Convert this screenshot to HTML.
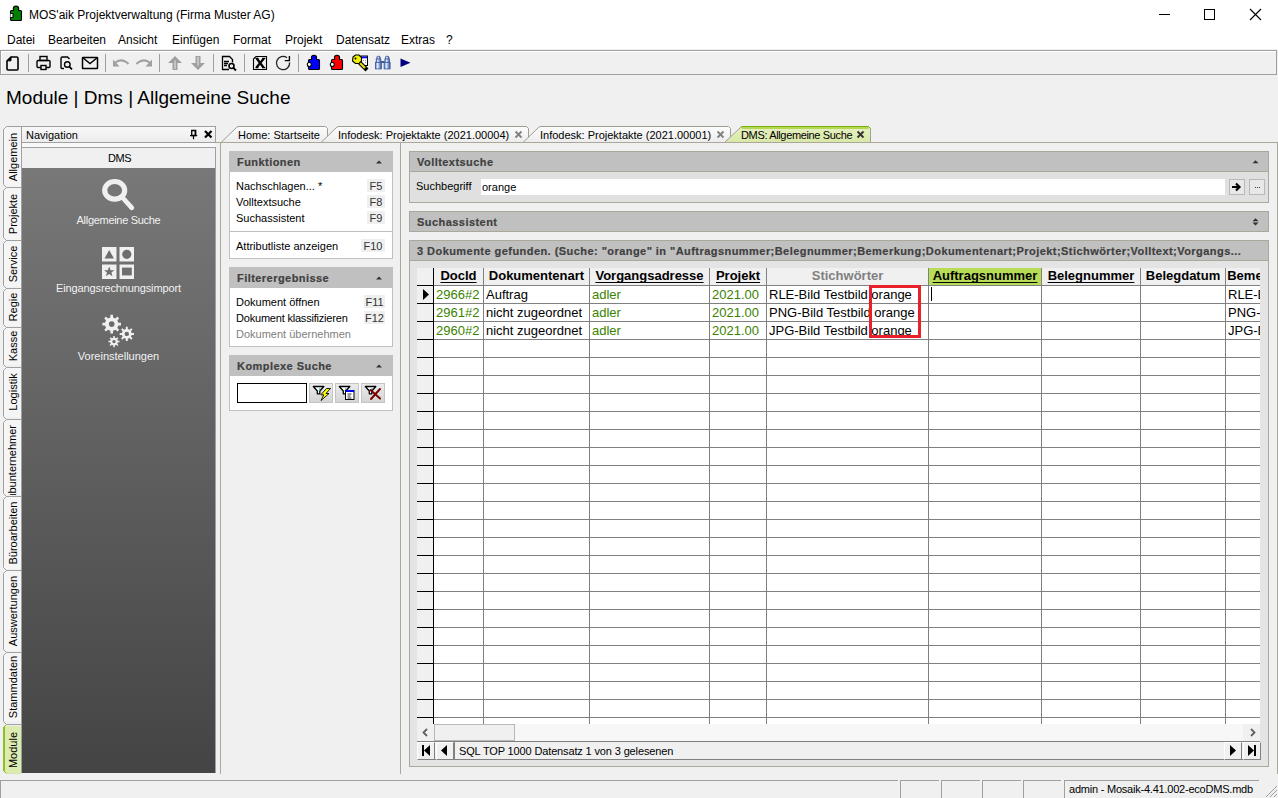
<!DOCTYPE html>
<html><head><meta charset="utf-8">
<style>
*{margin:0;padding:0;box-sizing:border-box}
html,body{width:1278px;height:798px;overflow:hidden;background:#f0f0f0;font-family:"Liberation Sans",sans-serif;color:#000}
.a{position:absolute}
.t{position:absolute;white-space:nowrap;line-height:1}
#title{left:0;top:0;width:1278px;height:28px;background:#fff}
#menu{left:0;top:28px;width:1278px;height:21px;background:#fff}
#tb{left:0;top:50px;width:1277px;height:25px;border:1px solid #a0a0a0;background:#f0f0f0;box-shadow:inset 1px 1px 0 #fff}
.sep{position:absolute;top:54px;width:1px;height:18px;background:#a0a0a0}

.vt{position:absolute;left:4px;width:17px;background:#f5f5f5;overflow:hidden}
.vt span{position:absolute;left:50%;top:50%;transform:translate(-50%,-50%) rotate(-90deg);font-size:11px;white-space:nowrap;line-height:1}
#nav{left:21px;top:126px;width:195px;height:17px;border:1px solid #a0a0a0;background:linear-gradient(#f8f8f8,#ececec)}
#dms{left:21px;top:147px;width:195px;height:21px;border:1px solid #a0a0a0;border-bottom:none;background:#f0f0f0}
#dark{left:21px;top:168px;width:195px;height:605px;background:linear-gradient(#787878,#444444);border-left:1px solid #a0a0a0;border-right:1px solid #a0a0a0}
.nl{position:absolute;font-size:11px;color:#f2f2f2;white-space:nowrap;line-height:1;text-align:center;width:195px;left:21px}

.dt{position:absolute;top:126px;height:17px;font-size:11px;line-height:1}
.bx{position:absolute;border:1px solid #aca899}
.hd{position:absolute;background:#c0c0c0;font-size:11px;font-weight:bold;color:#404040;line-height:1;white-space:nowrap;letter-spacing:0.45px;overflow:hidden;-webkit-text-stroke:0.2px #404040}
.tp{position:absolute;font-size:11px;line-height:1;white-space:nowrap}
.fk{position:absolute;background:#efefef;font-size:11px;line-height:1;color:#333;text-align:center}

.gh{position:absolute;top:269px;font-size:13px;font-weight:bold;line-height:1;white-space:nowrap}
.gh u{text-decoration:underline;text-decoration-thickness:1px;text-underline-offset:1.5px;text-decoration-skip-ink:none}
.gc{position:absolute;font-size:13px;line-height:1;white-space:nowrap}
.gg{color:#3a8200}

.tab{position:absolute;top:126px;height:17px}
.tab svg{position:absolute;left:0;top:0}
.tab span{position:absolute;top:4px;font-size:11px;line-height:1;white-space:nowrap}
</style></head><body>
<!-- title bar -->
<div class="a" id="title"></div>
<div class="t" style="left:29px;top:9px;font-size:12px">MOS'aik Projektverwaltung (Firma Muster AG)</div>
<div class="a" id="menu"></div>
<div class="t" style="left:7px;top:34px;font-size:12px">Datei</div>
<div class="t" style="left:48px;top:34px;font-size:12px">Bearbeiten</div>
<div class="t" style="left:118px;top:34px;font-size:12px">Ansicht</div>
<div class="t" style="left:172px;top:34px;font-size:12px">Einfügen</div>
<div class="t" style="left:233px;top:34px;font-size:12px">Format</div>
<div class="t" style="left:285px;top:34px;font-size:12px">Projekt</div>
<div class="t" style="left:336px;top:34px;font-size:12px">Datensatz</div>
<div class="t" style="left:401px;top:34px;font-size:12px">Extras</div>
<div class="t" style="left:446px;top:34px;font-size:12px">?</div>
<div class="a" id="tb"></div>

<div class="t" style="left:6px;top:88px;font-size:19px">Module | Dms | Allgemeine Suche</div>


<!-- left vertical tabs -->
<div class="vt" style="top:127px;height:60px"><span>Allgemein</span></div>
<div class="vt" style="top:187px;height:53px"><span>Projekte</span></div>
<div class="vt" style="top:240px;height:47px"><span>Service</span></div>
<div class="vt" style="top:288px;height:38px"><span>Regie</span></div>
<div class="vt" style="top:327px;height:38px"><span>Kasse</span></div>
<div class="vt" style="top:367px;height:50px"><span>Logistik</span></div>
<div class="vt" style="top:419px;height:76px"><span style="top:6px;left:50%;transform-origin:0 0;transform:translate(-6.5px,0) rotate(-90deg) translate(-100%,0)">Subunternehmer</span></div>
<div class="vt" style="top:496px;height:73px"><span>Büroarbeiten</span></div>
<div class="vt" style="top:570px;height:81px"><span>Auswertungen</span></div>
<div class="vt" style="top:652px;height:69px"><span>Stammdaten</span></div>
<div class="vt" style="top:726px;height:47px;background:#dcebb0"><span>Module</span></div>

<svg class="a" style="left:0;top:0" width="25" height="798" viewBox="0 0 25 798"><path d="M21 126.5 H6.5 L3.5 129.5 V184.5 L6.5 187.5 H21 M21 187.5 H6.5 L3.5 190.5 V237.5 L6.5 240.5 H21 M21 240.5 H6.5 L3.5 243.5 V285.5 L6.5 288.5 H21 M21 288.5 H6.5 L3.5 291.5 V324.5 L6.5 327.5 H21 M21 327.5 H6.5 L3.5 330.5 V364.5 L6.5 367.5 H21 M21 367.5 H6.5 L3.5 370.5 V416.5 L6.5 419.5 H21 M21 419.5 H6.5 L3.5 422.5 V493.5 L6.5 496.5 H21 M21 496.5 H6.5 L3.5 499.5 V567.5 L6.5 570.5 H21 M21 570.5 H6.5 L3.5 573.5 V649.5 L6.5 652.5 H21 M21 652.5 H6.5 L3.5 655.5 V721.5 L6.5 724.5 H21" fill="none" stroke="#a0a0a0"/><path d="M21 773.5 H6.5" stroke="#d8e4b0"/><path d="M6.5 724.5 L3.5 727.5 V770.5 L6.5 773.5" fill="none" stroke="#8cbf26" stroke-width="1"/><path d="M4 727 V771" stroke="#8cbf26" stroke-width="2"/></svg>
<!-- navigation panel -->
<div class="a" id="nav"></div>
<div class="t" style="left:26px;top:130px;font-size:11px">Navigation</div>
<div class="a" id="dms"></div>
<div class="a" style="left:21px;top:142px;width:1px;height:6px;background:#a0a0a0"></div>
<div class="a" style="left:22px;top:143px;width:193px;height:4px;background:#f8f8f8"></div>
<div class="t" style="left:22px;top:153px;width:195px;text-align:center;font-size:11px;letter-spacing:-0.4px">DMS</div>
<div class="a" id="dark"></div>
<div class="nl" style="top:215px;letter-spacing:-0.3px">Allgemeine Suche</div>
<div class="nl" style="top:283px;letter-spacing:-0.13px">Eingangsrechnungsimport</div>
<div class="nl" style="top:351px">Voreinstellungen</div>

<!-- nav icons -->
<svg class="a" style="left:0;top:0" width="230" height="380" viewBox="0 0 230 380">
  <g fill="none" stroke="#f0f0f0">
    <ellipse cx="114.7" cy="190.3" rx="10" ry="8.8" stroke-width="5.2"/>
    <line x1="122.5" y1="197.5" x2="131.8" y2="207.8" stroke-width="4.8" stroke-linecap="round"/>
  </g>
  <g fill="#f0f0f0">
    <rect x="102" y="247" width="14.5" height="14.5"/>
    <rect x="119.5" y="247" width="14.5" height="14.5"/>
    <rect x="102" y="264.5" width="14.5" height="14.5"/>
    <rect x="119.5" y="264.5" width="14.5" height="14.5"/>
  </g>
  <g fill="#6e6e6e">
    <polygon points="109.2,250 104.5,258.5 114,258.5"/>
    <circle cx="126.8" cy="254.3" r="4.6"/>
    <polygon points="109.2,266.5 110.6,270.2 114.4,270.3 111.4,272.6 112.5,276.3 109.2,274.1 105.9,276.3 107,272.6 104,270.3 107.8,270.2"/>
    <rect x="122" y="267.6" width="9.8" height="7.8"/>
  </g>
  <path fill="#f0f0f0" fill-rule="evenodd" d="M118.37,322.77 L121.01,322.81 L121.01,325.39 L118.37,325.43 L117.35,327.88 L119.19,329.77 L117.37,331.59 L115.48,329.75 L113.03,330.77 L112.99,333.41 L110.41,333.41 L110.37,330.77 L107.92,329.75 L106.03,331.59 L104.21,329.77 L106.05,327.88 L105.03,325.43 L102.39,325.39 L102.39,322.81 L105.03,322.77 L106.05,320.32 L104.21,318.43 L106.03,316.61 L107.92,318.45 L110.37,317.43 L110.41,314.79 L112.99,314.79 L113.03,317.43 L115.48,318.45 L117.37,316.61 L119.19,318.43 L117.35,320.32Z M114.50,324.10 a2.8,2.8 0 1,0 -5.6,0 a2.8,2.8 0 1,0 5.6,0Z M131.70,332.92 L133.93,332.91 L133.93,334.89 L131.70,334.88 L130.96,336.68 L132.54,338.25 L131.15,339.64 L129.58,338.06 L127.78,338.80 L127.79,341.03 L125.81,341.03 L125.82,338.80 L124.02,338.06 L122.45,339.64 L121.06,338.25 L122.64,336.68 L121.90,334.88 L119.67,334.89 L119.67,332.91 L121.90,332.92 L122.64,331.12 L121.06,329.55 L122.45,328.16 L124.02,329.74 L125.82,329.00 L125.81,326.77 L127.79,326.77 L127.78,329.00 L129.58,329.74 L131.15,328.16 L132.54,329.55 L130.96,331.12Z M129.00,333.90 a2.2,2.2 0 1,0 -4.4,0 a2.2,2.2 0 1,0 4.4,0Z M117.83,340.84 L119.55,340.83 L119.55,342.37 L117.83,342.36 L117.24,343.77 L118.46,344.98 L117.38,346.06 L116.17,344.84 L114.76,345.43 L114.77,347.15 L113.23,347.15 L113.24,345.43 L111.83,344.84 L110.62,346.06 L109.54,344.98 L110.76,343.77 L110.17,342.36 L108.45,342.37 L108.45,340.83 L110.17,340.84 L110.76,339.43 L109.54,338.22 L110.62,337.14 L111.83,338.36 L113.24,337.77 L113.23,336.05 L114.77,336.05 L114.76,337.77 L116.17,338.36 L117.38,337.14 L118.46,338.22 L117.24,339.43Z M115.70,341.60 a1.7,1.7 0 1,0 -3.4,0 a1.7,1.7 0 1,0 3.4,0Z"/>
  <!-- pin & close -->
  <g stroke="#000" fill="none">
    <path d="M191.7 130.5 h4 v5 h-4 z" stroke-width="1.3"/><path d="M195.3 130.5 v5" stroke-width="1.5"/><path d="M190 135.6 h7.2" stroke-width="1.1"/><path d="M193.5 136 v3.2" stroke-width="1.2"/>
    <path d="M205 131 l6.5 6.5 M211.5 131 l-6.5 6.5" stroke-width="2.2"/>
  </g>
</svg>



<!-- title icon & window controls -->
<svg class="a" style="left:0;top:0" width="1278" height="50" viewBox="0 0 1278 50">
  <g stroke="#000" stroke-width="1.1"><circle cx="16" cy="8.8" r="2.7" fill="#008000"/><rect x="10.5" y="10.5" width="11" height="10" rx="1" fill="#008000"/><path d="M14 10.5 h4" stroke="#008000" stroke-width="1.5"/><path d="M10.5 13.5 h2.5 v4 h-2.5" fill="#fff"/></g>
  <path d="M1159 14.5 h11" stroke="#000" stroke-width="1"/>
  <rect x="1204.5" y="9.5" width="10" height="10" fill="none" stroke="#000"/>
  <path d="M1250 9 l11 11 M1261 9 l-11 11" stroke="#000" stroke-width="1.1"/>
</svg>
<!-- toolbar icons -->
<svg class="a" style="left:0;top:50px" width="420" height="25" viewBox="0 50 420 25">
  <g fill="#a0a0a0">
    <rect x="28" y="54" width="1" height="18"/>
    <rect x="105" y="54" width="1" height="18"/>
    <rect x="159" y="54" width="1" height="18"/>
    <rect x="213" y="54" width="1" height="18"/>
    <rect x="244" y="54" width="1" height="18"/>
    <rect x="298" y="54" width="1" height="18"/>
  </g>
  <!-- new doc -->
  <path d="M11 57 h5.5 q1.5 0 1.5 1.5 v10.5 q0 1 -1 1 h-9 q-1 0 -1 -1 v-8 z" fill="none" stroke="#000" stroke-width="1.6" stroke-linejoin="round"/>
  <path d="M7 60.8 L11 56.8 v4 z" fill="#000" stroke="#000" stroke-width="1"/>
  <!-- printer -->
  <g fill="none" stroke="#000" stroke-width="1.4">
    <rect x="40" y="56.5" width="7" height="4"/>
    <path d="M41 67.5 h-3 q-1 0 -1 -1 v-5 q0 -1 1 -1 h11 q1 0 1 1 v5 q0 1 -1 1 h-3"/>
    <rect x="41" y="65.5" width="5" height="4"/>
  </g>
  <!-- page search -->
  <g fill="none" stroke="#000" stroke-width="1.4">
    <path d="M64 68.5 h-2 q-1 0 -1 -1 v-9 q0 -1.5 1.5 -1.5 h5 l2 2"/>
    <circle cx="67.3" cy="64.5" r="2.8"/>
    <path d="M69.5 66.8 l2.5 2.5" stroke-width="1.8"/>
  </g>
  <!-- mail -->
  <g fill="none" stroke="#000" stroke-width="1.5">
    <rect x="82.5" y="57.5" width="15" height="11" rx="0.5"/>
    <path d="M82.5 57.5 l7.5 6 l7.5 -6"/>
  </g>
  <!-- undo/redo -->
  <g fill="none" stroke="#a0a0a0" stroke-width="2">
    <path d="M115 63 q5 -5 12 -0.5 l1.5 1.5"/>
    <path d="M150 63 q-5 -5 -12 -0.5 l-1.5 1.5"/>
  </g>
  <path d="M113 59.5 v7 h6.5 z" fill="#a0a0a0"/>
  <path d="M152 59.5 v7 h-6.5 z" fill="#a0a0a0"/>
  <!-- up/down arrows -->
  <path d="M175 56 L182 63 H177.5 V70 H172.5 V63 H168 Z" fill="#a0a0a0"/><path d="M175 60.5 V69" stroke="#e8e8e8" stroke-width="1"/>
  <path d="M198 70 L205 63 H200.5 V56 H195.5 V63 H191 Z" fill="#a0a0a0"/><path d="M198 57 V65.5" stroke="#e8e8e8" stroke-width="1"/>
  <!-- doc search -->
  <g fill="none" stroke="#000" stroke-width="1.3">
    <path d="M229 69.5 h-6.5 v-13 h7 l3 3 v3"/>
    <path d="M224 61.5 h5 M224 63.5 h4 M224 65.5 h3"/>
    <circle cx="231.5" cy="66" r="2.5" stroke-width="1.6"/>
    <path d="M233.5 68 l2.5 2.5" stroke-width="1.8"/>
  </g>
  <!-- excel X box -->
  <path d="M253.5 59 L256 56.5 H266.5 V69.5 H253.5 Z" fill="none" stroke="#000" stroke-width="1.1"/>
  <path d="M256.8 58.5 L263.5 67.5 M263.8 58.5 L256.5 67.5" stroke="#000" stroke-width="2.3"/>
  <path d="M255.5 58.3 h3 M262.3 58.3 h3 M255.5 67.7 h3 M262.3 67.7 h3" stroke="#000" stroke-width="1.2"/>
  <!-- refresh -->
  <path d="M287 57.8 A6.6 6.6 0 1 0 289.6 62.5" fill="none" stroke="#202020" stroke-width="1.3"/>
  <path d="M289.4 56 V60.6 H284.8" fill="none" stroke="#000" stroke-width="1.4"/>
  <!-- puzzles -->
  <g stroke="#000" stroke-width="1.1"><circle cx="314" cy="57.8" r="2.6" fill="#0000ff"/><rect x="308.5" y="59.5" width="11" height="10" rx="1" fill="#0000ff"/><path d="M312 59.5 h4" stroke="#0000ff" stroke-width="1.5"/><circle cx="309.3" cy="64.5" r="2" fill="#fff"/></g>
  <g stroke="#000" stroke-width="1.1"><circle cx="337" cy="57.8" r="2.6" fill="#ff0000"/><rect x="331.5" y="59.5" width="11" height="10" rx="1" fill="#ff0000"/><path d="M335 59.5 h4" stroke="#ff0000" stroke-width="1.5"/><circle cx="332.3" cy="64.5" r="2" fill="#fff"/></g>
  <!-- key -->
  <rect x="361" y="56" width="6.5" height="9.5" fill="#fff" stroke="#000" stroke-width="1"/>
  <rect x="361.5" y="56.5" width="5.5" height="1.8" fill="#0000ff"/>
  <g fill="#909090"><rect x="363" y="60" width="1" height="1"/><rect x="365" y="60" width="1" height="1"/><rect x="365" y="62" width="1" height="1"/></g>
  <path d="M358.5 61.5 L365.5 68.5" stroke="#000" stroke-width="4.2" stroke-linecap="square"/>
  <path d="M358.5 61.5 L365 68" stroke="#e8e000" stroke-width="2.2"/>
  <path d="M353 57 l2.5 -2 h3.5 l2.5 2.5 v3.5 l-2.5 2.5 h-3.5 l-3 -2.5 z" fill="#f0f000" stroke="#000" stroke-width="1.1"/>
  <circle cx="355.5" cy="58.5" r="1" fill="#000"/>
  <!-- binoculars -->
  <defs><linearGradient id="bn" x1="0" y1="0" x2="1" y2="0"><stop offset="0" stop-color="#4a6cb0"/><stop offset="0.35" stop-color="#e8f0ff"/><stop offset="1" stop-color="#3050a0"/></linearGradient></defs>
  <g fill="url(#bn)" stroke="#3a5898" stroke-width="0.8">
    <rect x="376.8" y="56.3" width="3.4" height="3.2" rx="1"/>
    <rect x="385.5" y="56.3" width="3.4" height="3.2" rx="1"/>
    <rect x="376.2" y="59" width="4.6" height="3.5"/>
    <rect x="384.9" y="59" width="4.6" height="3.5"/>
    <rect x="375.4" y="62.3" width="6" height="6.6"/>
    <rect x="384.1" y="62.3" width="6" height="6.6"/>
  </g>
  <rect x="381" y="61" width="3.5" height="2" fill="#3a5898"/>
  <!-- play -->
  <path d="M400.5 58.5 l10 4.3 l-10 4.3 z" fill="#000080"/>
</svg>

<!-- document tabs -->
<svg class="a" style="left:215px;top:120px" width="670" height="24" viewBox="215 120 670 24">
  <defs><linearGradient id="tg" x1="0" y1="0" x2="0" y2="1"><stop offset="0" stop-color="#fdfdfd"/><stop offset="1" stop-color="#ececec"/></linearGradient>
  <linearGradient id="tgg" x1="0" y1="0" x2="0" y2="1"><stop offset="0" stop-color="#e6f0c0"/><stop offset="1" stop-color="#d8e8a8"/></linearGradient></defs>
  <path d="M221 142.5 L237 127 Q237.8 126.5 239 126.5 H325.5 L327.5 128.5 V142.5" fill="url(#tg)" stroke="#a09c90"/>
  <path d="M321 142.5 L337 127 Q337.8 126.5 339 126.5 H526.5 L528.5 128.5 V142.5" fill="url(#tg)" stroke="#a09c90"/>
  <path d="M523 142.5 L539 127 Q539.8 126.5 541 126.5 H728.5 L730.5 128.5 V142.5" fill="url(#tg)" stroke="#a09c90"/>
  <path d="M724.5 142.5 L740.5 127.5 Q741.5 126.5 743 126.5 H868.5 L870.5 128.5 V142.5" fill="url(#tgg)" stroke="#a0a0a0"/>
  <path d="M740.5 127.5 Q741.5 126.5 743 126.5 H868.5 L870.5 128.5" fill="none" stroke="#78b000"/>
  <path d="M742 127.5 H868.5" fill="none" stroke="#b4d858" stroke-width="2" transform="translate(0,0.5)"/>
  <path d="M215 142.5 H885" stroke="#aca899"/>
</svg>
<div class="t" style="left:238px;top:130px;font-size:11px">Home: Startseite</div>
<div class="t" style="left:338px;top:130px;font-size:11px">Infodesk: Projektakte (2021.00004)</div>
<div class="t" style="left:540px;top:130px;font-size:11px">Infodesk: Projektakte (2021.00001)</div>
<div class="t" style="left:741px;top:130px;font-size:11px;letter-spacing:-0.35px">DMS: Allgemeine Suche</div>
<svg class="a" style="left:514px;top:130px" width="9" height="9"><path d="M1.5 1.5l6 6M7.5 1.5l-6 6" stroke="#808080" stroke-width="1.8"/></svg>
<svg class="a" style="left:716px;top:130px" width="9" height="9"><path d="M1.5 1.5l6 6M7.5 1.5l-6 6" stroke="#808080" stroke-width="1.8"/></svg>
<svg class="a" style="left:856px;top:130px" width="9" height="9"><path d="M1.5 1.5l6 6M7.5 1.5l-6 6" stroke="#333" stroke-width="1.8"/></svg>

<!-- content outer -->
<div class="a" style="left:220px;top:142px;width:1058px;height:632px;border:1px solid #aca899;border-bottom:none;background:#f0f0f0"></div>
<div class="a" style="left:400px;top:142px;width:1px;height:632px;background:#aca899"></div>

<!-- task pane: Funktionen -->
<div class="hd" style="left:229px;top:151px;width:164px;height:21px;padding:6px 0 0 8px">Funktionen</div>
<div class="a" style="left:229px;top:172px;width:164px;height:87px;background:#fff;border:1px solid #c0c0c0;border-top:none"></div>
<div class="a" style="left:230px;top:231px;width:162px;height:1px;background:#c0c0c0"></div>
<div class="tp" style="left:236px;top:181px">Nachschlagen... *</div>
<div class="tp" style="left:236px;top:197px">Volltextsuche</div>
<div class="tp" style="left:236px;top:213px">Suchassistent</div>
<div class="tp" style="left:236px;top:241px">Attributliste anzeigen</div>
<div class="fk" style="left:367px;top:179px;width:18px;height:13px;padding-top:2px">F5</div>
<div class="fk" style="left:367px;top:195px;width:18px;height:13px;padding-top:2px">F8</div>
<div class="fk" style="left:367px;top:211px;width:18px;height:13px;padding-top:2px">F9</div>
<div class="fk" style="left:361px;top:239px;width:24px;height:13px;padding-top:2px">F10</div>

<!-- Filterergebnisse -->
<div class="hd" style="left:229px;top:267px;width:164px;height:21px;padding:6px 0 0 8px">Filterergebnisse</div>
<div class="a" style="left:229px;top:288px;width:164px;height:59px;background:#fff;border:1px solid #c0c0c0;border-top:none"></div>
<div class="tp" style="left:236px;top:297px">Dokument öffnen</div>
<div class="tp" style="left:236px;top:313px;letter-spacing:-0.2px">Dokument klassifizieren</div>
<div class="tp" style="left:236px;top:329px;color:#808080">Dokument übernehmen</div>
<div class="fk" style="left:364px;top:295px;width:21px;height:13px;padding-top:2px">F11</div>
<div class="fk" style="left:364px;top:311px;width:21px;height:13px;padding-top:2px">F12</div>

<!-- Komplexe Suche -->
<div class="hd" style="left:229px;top:355px;width:164px;height:21px;padding:6px 0 0 8px">Komplexe Suche</div>
<div class="a" style="left:229px;top:376px;width:164px;height:35px;background:#fff;border:1px solid #c0c0c0;border-top:none"></div>
<div class="a" style="left:237px;top:383px;width:70px;height:20px;background:#fff;border:1px solid #000"></div>

<!-- Volltextsuche -->
<div class="bx" style="left:409px;top:151px;width:860px;height:52px;background:#e0e0e0"></div>
<div class="hd" style="left:410px;top:152px;width:858px;height:19px;padding:5px 0 0 7px">Volltextsuche</div>
<div class="a" style="left:410px;top:171px;width:858px;height:1px;background:#aca899"></div>
<div class="tp" style="left:416px;top:181px">Suchbegriff</div>
<div class="a" style="left:481px;top:179px;width:744px;height:16px;background:#fff"></div>
<div class="t" style="left:482px;top:182px;font-size:11px">orange</div>
<div class="a" style="left:1229px;top:179px;width:16px;height:16px;background:#e8e8e8;border:1px solid #b8b8b8"></div>
<div class="a" style="left:1249px;top:179px;width:16px;height:16px;background:#e8e8e8;border:1px solid #b8b8b8"></div>

<!-- Suchassistent -->
<div class="bx" style="left:409px;top:211px;width:860px;height:21px;background:#c0c0c0"></div>
<div class="hd" style="left:410px;top:212px;width:858px;height:19px;padding:5px 0 0 7px">Suchassistent</div>

<!-- Ergebnisse -->
<div class="bx" style="left:409px;top:240px;width:860px;height:527px;background:#e4e4e4"></div>
<div class="hd" style="left:410px;top:241px;width:858px;height:19px;padding:5px 0 0 7px">3 Dokumente gefunden. (Suche: "orange" in "Auftragsnummer;Belegnummer;Bemerkung;Dokumentenart;Projekt;Stichwörter;Volltext;Vorgangs...</div>
<div class="a" style="left:410px;top:260px;width:858px;height:1px;background:#aca899"></div>
<!-- grid -->
<div class="a" style="left:417px;top:268px;width:843px;height:456px;background:#fff;overflow:hidden"></div>
<div class="a" style="left:417px;top:268px;width:843px;height:17px;background:#f0f0f0"></div>
<div class="a" style="left:417px;top:268px;width:16px;height:456px;background:#f0f0f0"></div>
<div class="a" style="left:929px;top:268px;width:112px;height:17px;background:#b7dc55"></div>
<div class="a" style="left:417px;top:285px;width:16px;height:1px;background:#000"></div>
<div class="a" style="left:434px;top:285px;width:826px;height:1px;background:#808080"></div>
<div class="a" style="left:417px;top:303px;width:16px;height:1px;background:#000"></div>
<div class="a" style="left:434px;top:303px;width:826px;height:1px;background:#808080"></div>
<div class="a" style="left:417px;top:321px;width:16px;height:1px;background:#000"></div>
<div class="a" style="left:434px;top:321px;width:826px;height:1px;background:#808080"></div>
<div class="a" style="left:417px;top:339px;width:16px;height:1px;background:#000"></div>
<div class="a" style="left:434px;top:339px;width:826px;height:1px;background:#808080"></div>
<div class="a" style="left:417px;top:357px;width:16px;height:1px;background:#000"></div>
<div class="a" style="left:434px;top:357px;width:826px;height:1px;background:#808080"></div>
<div class="a" style="left:417px;top:375px;width:16px;height:1px;background:#000"></div>
<div class="a" style="left:434px;top:375px;width:826px;height:1px;background:#808080"></div>
<div class="a" style="left:417px;top:393px;width:16px;height:1px;background:#000"></div>
<div class="a" style="left:434px;top:393px;width:826px;height:1px;background:#808080"></div>
<div class="a" style="left:417px;top:411px;width:16px;height:1px;background:#000"></div>
<div class="a" style="left:434px;top:411px;width:826px;height:1px;background:#808080"></div>
<div class="a" style="left:417px;top:429px;width:16px;height:1px;background:#000"></div>
<div class="a" style="left:434px;top:429px;width:826px;height:1px;background:#808080"></div>
<div class="a" style="left:417px;top:447px;width:16px;height:1px;background:#000"></div>
<div class="a" style="left:434px;top:447px;width:826px;height:1px;background:#808080"></div>
<div class="a" style="left:417px;top:465px;width:16px;height:1px;background:#000"></div>
<div class="a" style="left:434px;top:465px;width:826px;height:1px;background:#808080"></div>
<div class="a" style="left:417px;top:483px;width:16px;height:1px;background:#000"></div>
<div class="a" style="left:434px;top:483px;width:826px;height:1px;background:#808080"></div>
<div class="a" style="left:417px;top:501px;width:16px;height:1px;background:#000"></div>
<div class="a" style="left:434px;top:501px;width:826px;height:1px;background:#808080"></div>
<div class="a" style="left:417px;top:519px;width:16px;height:1px;background:#000"></div>
<div class="a" style="left:434px;top:519px;width:826px;height:1px;background:#808080"></div>
<div class="a" style="left:417px;top:537px;width:16px;height:1px;background:#000"></div>
<div class="a" style="left:434px;top:537px;width:826px;height:1px;background:#808080"></div>
<div class="a" style="left:417px;top:555px;width:16px;height:1px;background:#000"></div>
<div class="a" style="left:434px;top:555px;width:826px;height:1px;background:#808080"></div>
<div class="a" style="left:417px;top:573px;width:16px;height:1px;background:#000"></div>
<div class="a" style="left:434px;top:573px;width:826px;height:1px;background:#808080"></div>
<div class="a" style="left:417px;top:591px;width:16px;height:1px;background:#000"></div>
<div class="a" style="left:434px;top:591px;width:826px;height:1px;background:#808080"></div>
<div class="a" style="left:417px;top:609px;width:16px;height:1px;background:#000"></div>
<div class="a" style="left:434px;top:609px;width:826px;height:1px;background:#808080"></div>
<div class="a" style="left:417px;top:627px;width:16px;height:1px;background:#000"></div>
<div class="a" style="left:434px;top:627px;width:826px;height:1px;background:#808080"></div>
<div class="a" style="left:417px;top:645px;width:16px;height:1px;background:#000"></div>
<div class="a" style="left:434px;top:645px;width:826px;height:1px;background:#808080"></div>
<div class="a" style="left:417px;top:663px;width:16px;height:1px;background:#000"></div>
<div class="a" style="left:434px;top:663px;width:826px;height:1px;background:#808080"></div>
<div class="a" style="left:417px;top:681px;width:16px;height:1px;background:#000"></div>
<div class="a" style="left:434px;top:681px;width:826px;height:1px;background:#808080"></div>
<div class="a" style="left:417px;top:699px;width:16px;height:1px;background:#000"></div>
<div class="a" style="left:434px;top:699px;width:826px;height:1px;background:#808080"></div>
<div class="a" style="left:417px;top:717px;width:16px;height:1px;background:#000"></div>
<div class="a" style="left:434px;top:717px;width:826px;height:1px;background:#808080"></div>
<div class="a" style="left:433px;top:268px;width:1px;height:456px;background:#000"></div>
<div class="a" style="left:483px;top:268px;width:1px;height:456px;background:#808080"></div>
<div class="a" style="left:589px;top:268px;width:1px;height:456px;background:#808080"></div>
<div class="a" style="left:709px;top:268px;width:1px;height:456px;background:#808080"></div>
<div class="a" style="left:766px;top:268px;width:1px;height:456px;background:#808080"></div>
<div class="a" style="left:928px;top:268px;width:1px;height:456px;background:#808080"></div>
<div class="a" style="left:1041px;top:268px;width:1px;height:456px;background:#808080"></div>
<div class="a" style="left:1140px;top:268px;width:1px;height:456px;background:#808080"></div>
<div class="a" style="left:1225px;top:268px;width:1px;height:456px;background:#808080"></div>
<div class="gh" style="left:434px;width:49px;text-align:center;"><u>DocId</u></div>
<div class="gh" style="left:484px;width:105px;text-align:center;">Dokumentenart</div>
<div class="gh" style="left:590px;width:119px;text-align:center;"><u>Vorgangsadresse</u></div>
<div class="gh" style="left:710px;width:56px;text-align:center;"><u>Projekt</u></div>
<div class="gh" style="left:767px;width:161px;text-align:center;color:#808080">Stichwörter</div>
<div class="gh" style="left:929px;width:112px;text-align:center;"><u>Auftragsnummer</u></div>
<div class="gh" style="left:1042px;width:98px;text-align:center;"><u>Belegnummer</u></div>
<div class="gh" style="left:1141px;width:84px;text-align:center;">Belegdatum</div>
<div class="gh" style="left:1226px;width:34px;overflow:hidden;"><div style="width:74px;text-align:center">Bemerkung</div></div>
<div class="gc gg" style="left:436px;top:288px">2966#2</div>
<div class="gc" style="left:486px;top:288px">Auftrag</div>
<div class="gc gg" style="left:592px;top:288px">adler</div>
<div class="gc gg" style="left:712px;top:288px">2021.00</div>
<div class="gc" style="left:769px;top:288px">RLE-Bild Testbild orange</div>
<div class="gc" style="left:1228px;top:288px;width:32px;overflow:hidden">RLE-Bild Testbild</div>
<div class="gc gg" style="left:436px;top:306px">2961#2</div>
<div class="gc" style="left:486px;top:306px">nicht zugeordnet</div>
<div class="gc gg" style="left:592px;top:306px">adler</div>
<div class="gc gg" style="left:712px;top:306px">2021.00</div>
<div class="gc" style="left:769px;top:306px">PNG-Bild Testbild  orange</div>
<div class="gc" style="left:1228px;top:306px;width:32px;overflow:hidden">PNG-Bild Testbild</div>
<div class="gc gg" style="left:436px;top:324px">2960#2</div>
<div class="gc" style="left:486px;top:324px">nicht zugeordnet</div>
<div class="gc gg" style="left:592px;top:324px">adler</div>
<div class="gc gg" style="left:712px;top:324px">2021.00</div>
<div class="gc" style="left:769px;top:324px">JPG-Bild Testbild orange</div>
<div class="gc" style="left:1228px;top:324px;width:32px;overflow:hidden">JPG-Bild Testbild</div>
<svg class="a" style="left:423px;top:289px" width="7" height="11"><polygon points="0,0 6,5.5 0,11" fill="#000"/></svg>
<div class="a" style="left:931px;top:287px;width:1px;height:14px;background:#000"></div>
<div class="a" style="left:869px;top:285px;width:52px;height:53px;border:3px solid #e8202a"></div>
<div class="a" style="left:1260px;top:261px;width:8px;height:505px;background:#e4e4e4"></div>
<div class="a" style="left:417px;top:724px;width:843px;height:17px;background:#f7f7f7"></div>
<div class="a" style="left:417px;top:724px;width:18px;height:17px;background:#f0f0f0"></div>
<div class="a" style="left:1243px;top:724px;width:17px;height:17px;background:#f0f0f0"></div>
<div class="a" style="left:434px;top:724px;width:81px;height:17px;background:#f0f0f0;border:1px solid #b8b8b8"></div>
<svg class="a" style="left:417px;top:724px" width="18" height="17"><path d="M10 5 l-3.5 3.5 l3.5 3.5" fill="none" stroke="#606060" stroke-width="1.8"/></svg>
<svg class="a" style="left:1243px;top:724px" width="17" height="17"><path d="M8 5 l3.5 3.5 l-3.5 3.5" fill="none" stroke="#606060" stroke-width="1.8"/></svg>
<div class="a" style="left:417px;top:742px;width:843px;height:18px;background:#f0f0f0;border-bottom:1px solid #808080"></div>
<div class="t" style="left:459px;top:746px;font-size:11px;letter-spacing:-0.14px">SQL TOP 1000 Datensatz 1 von 3 gelesenen</div>

<!-- header carets -->
<svg class="a" style="left:0;top:0" width="1278" height="798" viewBox="0 0 1278 798">
  <g fill="#303030">
    <path d="M376 163.5 h6 l-3 -3 z"/>
    <path d="M376 279.5 h6 l-3 -3 z"/>
    <path d="M376 367.5 h6 l-3 -3 z"/>
    <path d="M1252.5 163.2 h6 l-3 -3 z"/>
    <path d="M1252.5 221.2 h6 l-3 -3 z M1252.5 222.6 h6 l-3 3 z"/>
  </g>
  <!-- search arrow button -->
  <path d="M1232 187 h7 M1236 183.5 l3.5 3.5 l-3.5 3.5" stroke="#000" stroke-width="2.2" fill="none"/>
  <path d="M1255 187.5 h1 M1257 187.5 h1 M1259 187.5 h1" stroke="#404040" stroke-width="1"/>
  <!-- komplexe suche icons -->
  <defs><linearGradient id="bg1" x1="0" y1="0" x2="0" y2="1"><stop offset="0" stop-color="#ececec"/><stop offset="1" stop-color="#d4d4d4"/></linearGradient></defs>
  <g fill="url(#bg1)" stroke="#c4c4c4"><rect x="309.5" y="383.5" width="23" height="19"/><rect x="335.5" y="383.5" width="23" height="19"/><rect x="361.5" y="383.5" width="23" height="19"/></g>
  <g fill="#fff" stroke="#000" stroke-width="1.3" stroke-linejoin="round">
    <path d="M313.3 386.5 h10.5 l-4 4.5 v2.8 h-2.5 v-2.8 z"/>
    <path d="M339.3 386.5 h10.5 l-4 4.5 v2.8 h-2.5 v-2.8 z"/>
    <path d="M365.3 386.5 h10.5 l-4 4.5 v2.8 h-2.5 v-2.8 z"/>
  </g>
  <path d="M320 388 l-1 3 M346 388 l-1 3 M372 388 l-1 3" stroke="#40c0c0" stroke-width="1"/>
  <path d="M326.5 388.5 L330.5 388.5 L326 393.5 L329 393.5 L321 400.5 L323.8 394.8 L320.8 394.8 Z" fill="#ffff00" stroke="#000" stroke-width="0.9" stroke-linejoin="round"/>
  <rect x="345.5" y="390.5" width="8.5" height="9" fill="#fff" stroke="#000" stroke-width="1"/>
  <rect x="346" y="390" width="8" height="2" fill="#0000ff"/>
  <path d="M347.5 394 h4 M347.5 396 h3 M347.5 398 h4" stroke="#000" stroke-width="0.8"/>
  <path d="M370.5 390 l9.5 8.5 M380 389 l-9 10" stroke="#7a0000" stroke-width="2" stroke-linecap="round"/>
</svg>

<!-- navigator buttons -->
<div class="a" style="left:417px;top:742px;width:18px;height:18px;background:#f0f0f0;border:1px solid #fff;border-right-color:#808080;border-bottom-color:#808080"></div>
<div class="a" style="left:436px;top:742px;width:18px;height:18px;background:#f0f0f0;border:1px solid #fff;border-right-color:#808080;border-bottom-color:#808080"></div>
<div class="a" style="left:1224px;top:742px;width:18px;height:18px;background:#f0f0f0;border:1px solid #fff;border-right-color:#808080;border-bottom-color:#808080"></div>
<div class="a" style="left:1243px;top:742px;width:18px;height:18px;background:#f0f0f0;border:1px solid #fff;border-right-color:#808080;border-bottom-color:#808080"></div>
<div class="a" style="left:454px;top:742px;width:769px;height:18px;border-left:1px solid #808080"></div>
<div class="a" style="left:417px;top:741px;width:843px;height:1px;background:#808080"></div>
<svg class="a" style="left:0;top:0" width="1278" height="798" viewBox="0 0 1278 798">
  <g fill="#000">
    <rect x="422" y="745" width="2" height="11"/>
    <path d="M430 745 v11 l-6 -5.5 z"/>
    <path d="M447 745 v11 l-6 -5.5 z"/>
    <path d="M1230 745 v11 l6 -5.5 z"/>
    <path d="M1248 745 v11 l6 -5.5 z"/>
    <rect x="1254" y="745" width="2" height="11"/>
  </g>
</svg>

<!-- status bar -->
<div class="a" style="left:0;top:780px;width:898px;height:18px;border-top:1px solid #a0a0a0;border-left:1px solid #a0a0a0"></div>
<div class="a" style="left:900px;top:780px;width:39px;height:18px;border-top:1px solid #a0a0a0;border-left:1px solid #a0a0a0"></div>
<div class="a" style="left:941px;top:780px;width:39px;height:18px;border-top:1px solid #a0a0a0;border-left:1px solid #a0a0a0"></div>
<div class="a" style="left:982px;top:780px;width:39px;height:18px;border-top:1px solid #a0a0a0;border-left:1px solid #a0a0a0"></div>
<div class="a" style="left:1023px;top:780px;width:38px;height:18px;border-top:1px solid #a0a0a0;border-left:1px solid #a0a0a0"></div>
<div class="a" style="left:1064px;top:780px;width:195px;height:18px;border-top:1px solid #a0a0a0;border-left:1px solid #a0a0a0"></div>
<div class="t" style="left:1069px;top:784px;font-size:11px;letter-spacing:-0.22px">admin - Mosaik-4.41.002-ecoDMS.mdb</div>
<svg class="a" style="left:1262px;top:782px" width="16" height="16"><path d="M15 4 L4 15 M15 8 L8 15 M15 12 L12 15" stroke="#a0a0a0" stroke-width="1"/></svg>
</body></html>
